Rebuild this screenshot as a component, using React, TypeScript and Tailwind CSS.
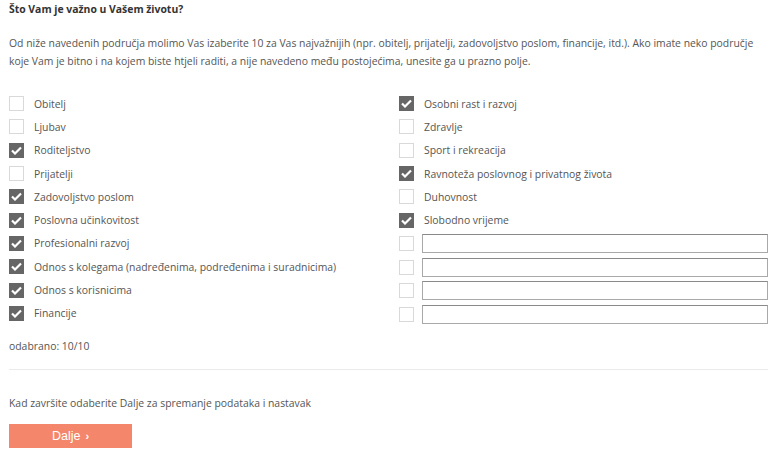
import React, { useState } from "react";

const leftItems = [
  { label: "Obitelj", checked: false },
  { label: "Ljubav", checked: false },
  { label: "Roditeljstvo", checked: true },
  { label: "Prijatelji", checked: false },
  { label: "Zadovoljstvo poslom", checked: true },
  { label: "Poslovna učinkovitost", checked: true },
  { label: "Profesionalni razvoj", checked: true },
  { label: "Odnos s kolegama (nadređenima, podređenima i suradnicima)", checked: true },
  { label: "Odnos s korisnicima", checked: true },
  { label: "Financije", checked: true },
];

const rightItems = [
  { label: "Osobni rast i razvoj", checked: true },
  { label: "Zdravlje", checked: false },
  { label: "Sport i rekreacija", checked: false },
  { label: "Ravnoteža poslovnog i privatnog života", checked: true },
  { label: "Duhovnost", checked: false },
  { label: "Slobodno vrijeme", checked: true },
];

const Box = ({ checked }: { checked: boolean }) =>
  checked ? (
    <span className="w-[15px] h-[15px] bg-[#666666] flex items-center justify-center shrink-0">
      <svg width="11" height="9" viewBox="0 0 11 9">
        <path d="M1 4.5 L4 7.5 L10 1.5" stroke="#fff" strokeWidth="2.2" fill="none" />
      </svg>
    </span>
  ) : (
    <span className="w-[15px] h-[15px] border border-[#d9d9d9] bg-white shrink-0" />
  );

const Row = ({ label, checked }: { label: string; checked: boolean }) => (
  <div className="h-[23.3px] flex items-center">
    <Box checked={checked} />
    <span className="ml-[10px] whitespace-nowrap">{label}</span>
  </div>
);

export default function App() {
  const [extra] = useState(["", "", "", ""]);
  return (
    <div
      className="w-[778px] h-[460px] bg-white pl-[9px] pr-[10px] text-[10.4px] leading-[18px] text-[#555555]"
      style={{ fontFamily: '"Open Sans", "Liberation Sans", sans-serif' }}
    >
      <h2 className="font-bold text-[#333333]">Što Vam je važno u Vašem životu?</h2>

      <p className="mt-[16px]">
        Od niže navedenih područja molimo Vas izaberite 10 za Vas najvažnijih (npr. obitelj, prijatelji, zadovoljstvo
        poslom, financije, itd.). Ako imate neko područje koje Vam je bitno i na kojem biste htjeli raditi, a nije
        navedeno među postojećima, unesite ga u prazno polje.
      </p>

      <div className="grid grid-cols-[390px_1fr] mt-[22px]">
        <div className="flex flex-col">
          {leftItems.map((it) => (
            <Row key={it.label} {...it} />
          ))}
        </div>
        <div className="flex flex-col">
          {rightItems.map((it) => (
            <Row key={it.label} {...it} />
          ))}
          {extra.map((_, i) => (
            <div key={i} className="h-[23.6px] flex items-center">
              <Box checked={false} />
              <input
                type="text"
                className="ml-[8px] flex-1 h-[19px] border border-[#a9a9a9] border-t-[#8a8a8a] bg-white outline-none"
              />
            </div>
          ))}
        </div>
      </div>

      <div className="mt-[11px]">odabrano: 10/10</div>

      <hr className="mt-[14px] border-0 border-t border-[#ebebeb]" />

      <div className="mt-[24px]">Kad završite odaberite Dalje za spremanje podataka i nastavak</div>

      <button
        className="mt-[12px] w-[123px] h-[24px] bg-[#f4876b] text-white text-[12.5px] flex items-center justify-center"
        style={{ fontFamily: '"Liberation Sans", Arial, sans-serif' }}
      >
        Dalje <span className="ml-[5px] text-[11px] font-bold">›</span>
      </button>
    </div>
  );
}
